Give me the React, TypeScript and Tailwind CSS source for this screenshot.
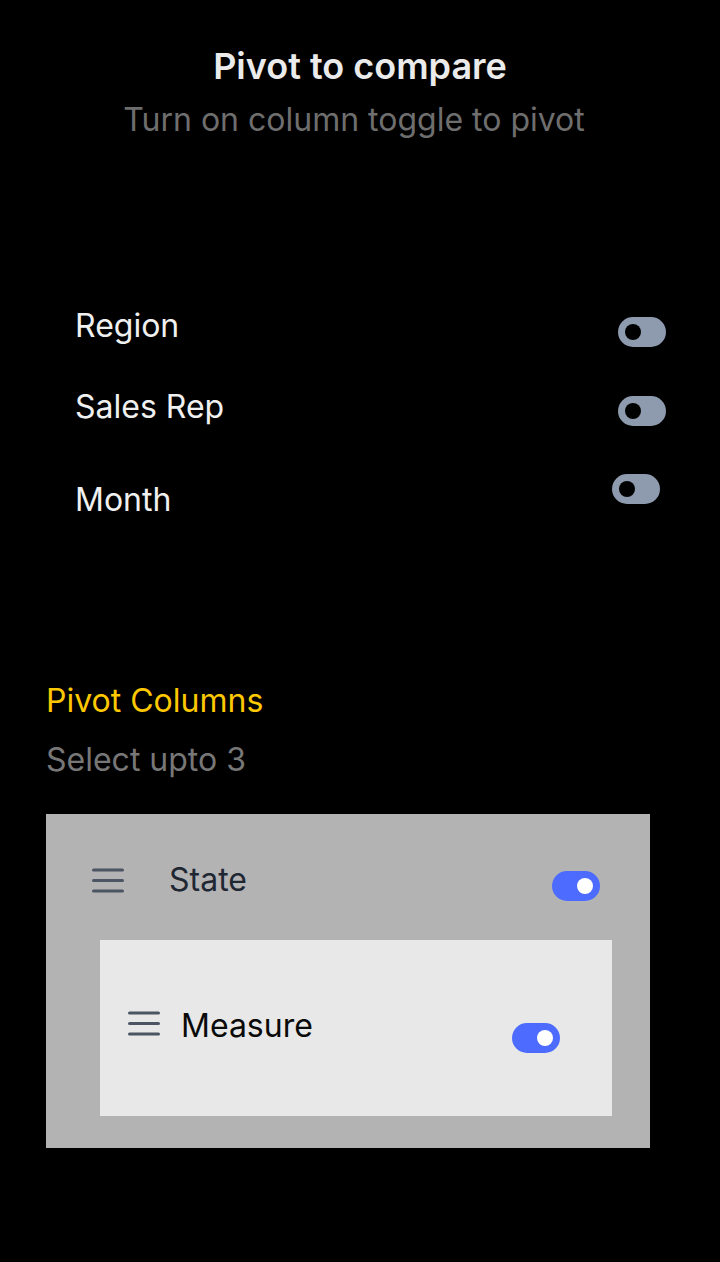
const font = { fontFamily: 'Inter, "Noto Sans", sans-serif' };

interface ToggleProps {
  on?: boolean;
  className?: string;
}

const Toggle = ({ on = false, className = '' }: ToggleProps) => (
  <div
    className={`relative h-[30px] w-[48px] shrink-0 rounded-full ${
      on ? 'bg-[#4d6bfe]' : 'bg-[#8e9aad]'
    } ${className}`}
  >
    <span
      className={`absolute top-[7px] h-[16px] w-[16px] rounded-full ${
        on ? 'right-[7px] bg-white' : 'left-[7px] bg-black'
      }`}
    />
  </div>
);

const DragHandle = ({ className = '' }: { className?: string }) => (
  <svg width="32" height="26" viewBox="0 0 32 26" className={`shrink-0 ${className}`}>
    <g stroke="#4b5563" strokeWidth="3" strokeLinecap="round">
      <line x1="1.5" y1="2" x2="30.5" y2="2" />
      <line x1="1.5" y1="12.5" x2="30.5" y2="12.5" />
      <line x1="1.5" y1="23" x2="30.5" y2="23" />
    </g>
  </svg>
);

export default function App() {
  return (
    <div className="min-h-[1262px] w-full bg-black" style={font}>
      {/* Header */}
      <div className="flex flex-col items-center pt-[44px]">
        <h1 className="text-[36px] leading-[44px] font-semibold text-[#ebebeb]">
          Pivot to compare
        </h1>
        <p className="mr-[12px] mt-[12px] text-[32px] leading-[40px] text-[#6e6e6e]">
          Turn on column toggle to pivot
        </p>
      </div>

      {/* Column toggles */}
      <div className="mt-[166px] pl-[75px] pr-[54px]">
        <div className="flex items-start justify-between">
          <span className="text-[32px] leading-[40px] text-[#f0f0f0]">Region</span>
          <Toggle className="mt-[11px]" />
        </div>
        <div className="mt-[40px] flex items-start justify-between">
          <span className="text-[32px] leading-[40px] text-[#f0f0f0]">Sales Rep</span>
          <Toggle className="mt-[9px]" />
        </div>
        <div className="mt-[53px] flex items-start justify-between">
          <span className="text-[32px] leading-[40px] text-[#f0f0f0]">Month</span>
          <Toggle className="mr-[6px] mt-[-6px]" />
        </div>
      </div>

      {/* Pivot columns */}
      <div className="mt-[161px] pl-[46px]">
        <h2 className="text-[32px] leading-[40px] text-[#fdc800]">Pivot Columns</h2>
        <p className="mt-[19px] text-[32px] leading-[40px] text-[#777777]">Select upto 3</p>
      </div>

      <div className="ml-[46px] mt-[34px] w-[604px] bg-[#b3b3b3] pb-[32px] pt-[46px]">
        <div className="flex items-start pl-[46px] pr-[50px]">
          <DragHandle className="mt-[8px]" />
          <span className="ml-[45px] text-[32px] leading-[40px] text-[#1f2733]">State</span>
          <Toggle on className="ml-auto mt-[11px]" />
        </div>

        <div className="ml-[54px] mt-[39px] h-[176px] w-[512px] bg-[#e8e8e8] pl-[28px] pr-[52px] pt-[66px]">
          <div className="flex items-start">
            <DragHandle className="mt-[5px]" />
            <span className="ml-[21px] text-[32px] leading-[40px] text-[#0a0a0a]">Measure</span>
            <Toggle on className="ml-auto mt-[17px]" />
          </div>
        </div>
      </div>
    </div>
  );
}
